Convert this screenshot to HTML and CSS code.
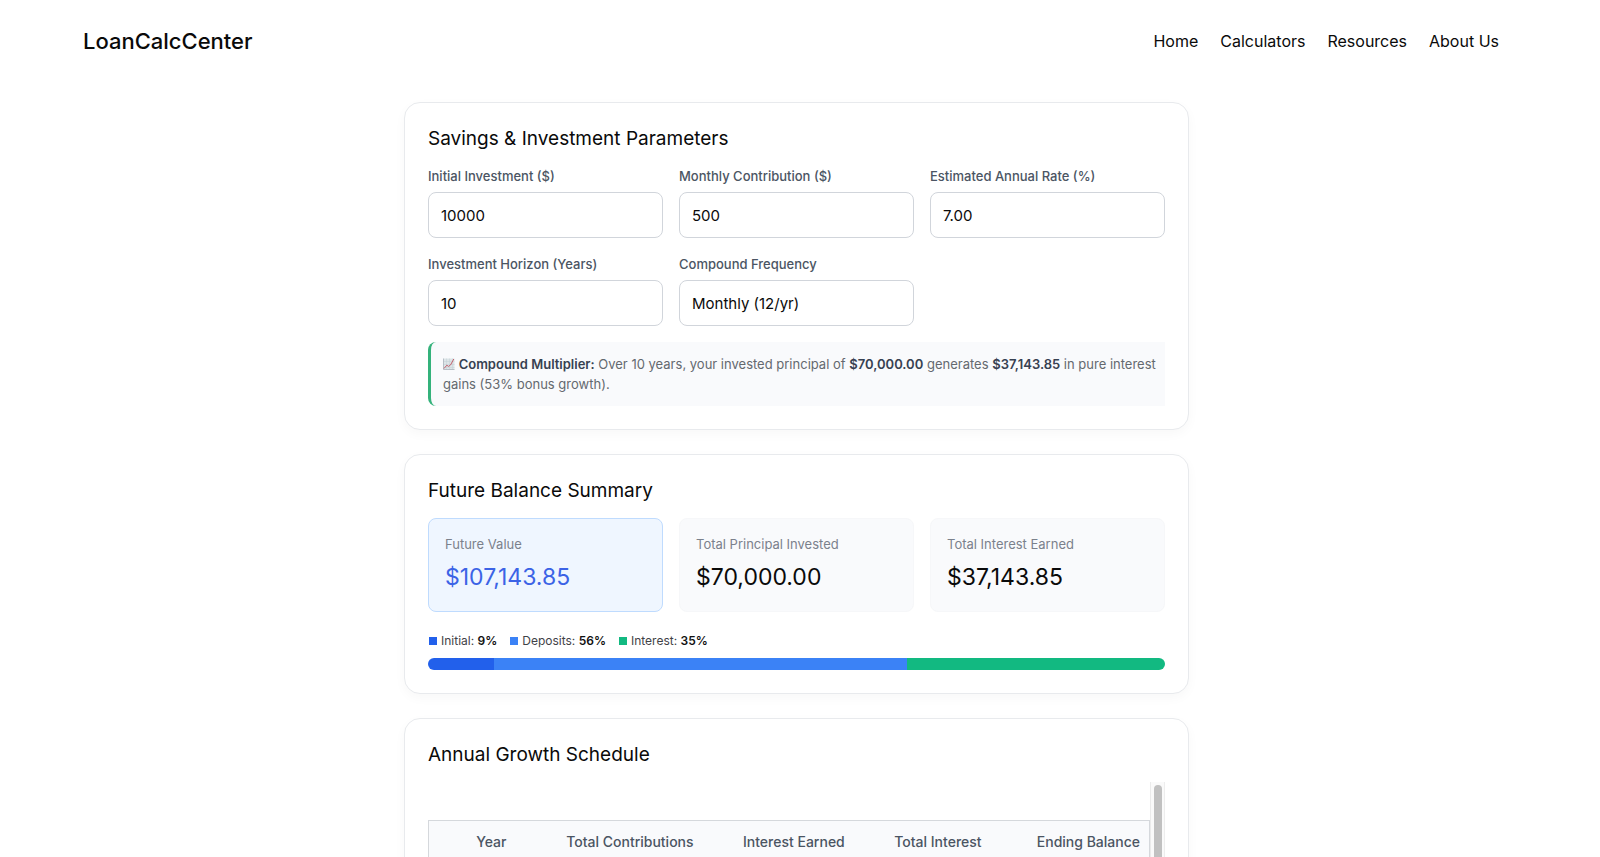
FILE: index.html
```
<!DOCTYPE html>
<html lang="en">
<head>
    <meta charset="UTF-8">
    <meta name="viewport" content="width=device-width, initial-scale=1.0">
    <title>Savings &amp; Investment Calculator - LoanCalcCenter</title>
    <link rel="stylesheet" href="styles.css">
</head>
<body>
    <header class="site-header">
        <a class="logo" href="#">LoanCalcCenter</a>
        <nav class="site-nav">
            <a href="#">Home</a>
            <a href="#">Calculators</a>
            <a href="#">Resources</a>
            <a href="#">About Us</a>
        </nav>
    </header>

    <main class="container">
        <section class="card">
            <h2>Savings &amp; Investment Parameters</h2>
            <form class="form-grid">
                <div class="field">
                    <label for="initial">Initial Investment ($)</label>
                    <input type="text" inputmode="decimal" id="initial" value="10000">
                </div>
                <div class="field">
                    <label for="monthly">Monthly Contribution ($)</label>
                    <input type="text" inputmode="decimal" id="monthly" value="500">
                </div>
                <div class="field">
                    <label for="rate">Estimated Annual Rate (%)</label>
                    <input type="text" inputmode="decimal" id="rate" value="7.00">
                </div>
                <div class="field">
                    <label for="years">Investment Horizon (Years)</label>
                    <input type="text" inputmode="numeric" id="years" value="10">
                </div>
                <div class="field">
                    <label for="frequency">Compound Frequency</label>
                    <select id="frequency">
                        <option>Monthly (12/yr)</option>
                    </select>
                </div>
            </form>
            <p class="note">
                <svg class="note-icon" viewBox="0 0 12 12" aria-hidden="true">
                    <rect x="0.5" y="0.5" width="11" height="11" fill="#dde5e8"/>
                    <path d="M0.5 3.5h11M0.5 6.5h11M0.5 9.5h11M3.5 0.5v11M6.5 0.5v11M9.5 0.5v11" stroke="#c3d0d6" stroke-width="0.5"/>
                    <path d="M0.5 0.5v11h11" fill="none" stroke="#a9b3bb" stroke-width="0.8"/>
                    <path d="M1 10.5L3.8 7.2l1.7 1.2 2-1.4L10.8 1" fill="none" stroke="#c4616d" stroke-width="1"/>
                </svg>
                <strong>Compound Multiplier:</strong> Over 10 years, your invested principal of <strong>$70,000.00</strong> generates <strong>$37,143.85</strong> in pure interest gains (53% bonus growth).
            </p>
        </section>

        <section class="card">
            <h2>Future Balance Summary</h2>
            <div class="stats">
                <div class="stat stat-primary">
                    <div class="stat-label">Future Value</div>
                    <div class="stat-value">$107,143.85</div>
                </div>
                <div class="stat">
                    <div class="stat-label">Total Principal Invested</div>
                    <div class="stat-value">$70,000.00</div>
                </div>
                <div class="stat">
                    <div class="stat-label">Total Interest Earned</div>
                    <div class="stat-value">$37,143.85</div>
                </div>
            </div>
            <div class="legend">
                <span><i class="swatch initial"></i>Initial: <strong>9%</strong></span>
                <span><i class="swatch deposits"></i>Deposits: <strong>56%</strong></span>
                <span><i class="swatch interest"></i>Interest: <strong>35%</strong></span>
            </div>
            <div class="bar">
                <div class="initial" style="width: 9%"></div>
                <div class="deposits" style="width: 56%"></div>
                <div class="interest" style="width: 35%"></div>
            </div>
        </section>

        <section class="card">
            <h2>Annual Growth Schedule</h2>
            <div class="table-scroll">
                <div class="table-wrap">
                    <table>
                        <thead>
                            <tr>
                                <th class="col-year">Year</th>
                                <th class="col-contrib">Total Contributions</th>
                                <th class="col-earned">Interest Earned</th>
                                <th class="col-interest">Total Interest</th>
                                <th class="col-balance">Ending Balance</th>
                            </tr>
                        </thead>
                    </table>
                </div>
                <div class="scroll-track">
                    <div class="scroll-thumb"></div>
                </div>
            </div>
        </section>
    </main>
</body>
</html>
```
FILE: styles.css
```
* {
    box-sizing: border-box;
}

body {
    margin: 0;
    padding-right: 7px;
    background-color: #ffffff;
    color: #0a0a0a;
    font-family: Inter, sans-serif;
    font-size: 16px;
}

.site-header {
    display: flex;
    justify-content: space-between;
    align-items: center;
    padding: 26px 94px 26px 83px;
}

.site-header a {
    color: #0a0a0a;
    text-decoration: none;
}

.logo {
    font-size: 22px;
    font-weight: 500;
    line-height: 30px;
}

.site-nav {
    display: flex;
    gap: 22px;
    line-height: 24px;
}

.container {
    display: flex;
    flex-direction: column;
    gap: 24px;
    max-width: 785px;
    margin: 20px auto;
}

.card {
    background-color: #ffffff;
    border: 1px solid #e8eaed;
    border-radius: 16px;
    padding: 23px;
    box-shadow: 0 4px 12px rgba(0, 0, 0, 0.03);
}

h2 {
    margin: 0 0 15px;
    font-size: 19px;
    font-weight: 400;
    line-height: 25px;
}

.form-grid,
.stats {
    display: grid;
    grid-template-columns: repeat(3, 1fr);
    gap: 16px;
}

.field label {
    display: block;
    margin-bottom: 6px;
    color: #4b5563;
    font-size: 13px;
    font-weight: 500;
    line-height: 20px;
}

.field input,
.field select {
    display: block;
    width: 100%;
    height: 46px;
    padding: 0 12px;
    appearance: none;
    background-color: #ffffff;
    border: 1px solid #d1d5db;
    border-radius: 8px;
    color: #0a0a0a;
    font-family: inherit;
    font-size: 15px;
}

.note {
    margin: 16px 0 0;
    padding: 12px 4px 12px 12px;
    background-color: #f9fafc;
    border-left: 3px solid #34b27b;
    border-radius: 8px 0 0 8px;
    color: #64696f;
    font-size: 13px;
    line-height: 20px;
}

.note strong {
    color: #374151;
    font-weight: 600;
}

.note-icon {
    width: 12px;
    height: 12px;
    vertical-align: -1px;
}

.stat {
    padding: 16px;
    background-color: #f9fafc;
    border: 1px solid #f6f7f9;
    border-radius: 8px;
}

.stat-label {
    margin-bottom: 6px;
    color: #7b818c;
    font-size: 13px;
    line-height: 18px;
}

.stat-value {
    font-size: 23px;
    line-height: 36px;
}

.stat-primary {
    background-color: #eff6ff;
    border-color: #bfdbfe;
}

.stat-primary .stat-value {
    color: #3b63e6;
}

.legend {
    display: flex;
    gap: 12px;
    margin: 20px 0 8px;
    color: #3f4247;
    font-size: 12px;
    line-height: 18px;
}

.legend strong {
    color: #111111;
    font-weight: 600;
}

.swatch {
    display: inline-block;
    width: 8px;
    height: 8px;
    margin: 0 4px 0 1px;
}

.initial {
    background-color: #2260eb;
}

.deposits {
    background-color: #3b82f6;
}

.interest {
    background-color: #12b981;
}

.bar {
    display: flex;
    height: 12px;
    border-radius: 6px;
    overflow: hidden;
}

.table-scroll {
    display: flex;
    min-height: 360px;
}

.table-wrap {
    flex: 1;
    padding-top: 38px;
}

table {
    width: 100%;
    border: 1px solid #d5d8dc;
    border-spacing: 0;
    table-layout: fixed;
    font-size: 14px;
    line-height: 20px;
}

th {
    padding: 11px 9px;
    background-color: #f9fafc;
    color: #4b5563;
    font-weight: 500;
    text-align: right;
}

.col-year {
    width: 12%;
}

.col-contrib {
    width: 26%;
}

.col-earned {
    width: 21%;
}

.col-interest {
    width: 19%;
}

.col-balance {
    width: 22%;
}

.scroll-track {
    width: 15px;
    padding: 3px;
    background-color: #fafafa;
    border-left: 1px solid #ebebeb;
    border-right: 1px solid #ededed;
}

.scroll-thumb {
    width: 8px;
    height: 240px;
    border-radius: 4px;
    background-color: #c1c1c1;
}
```
